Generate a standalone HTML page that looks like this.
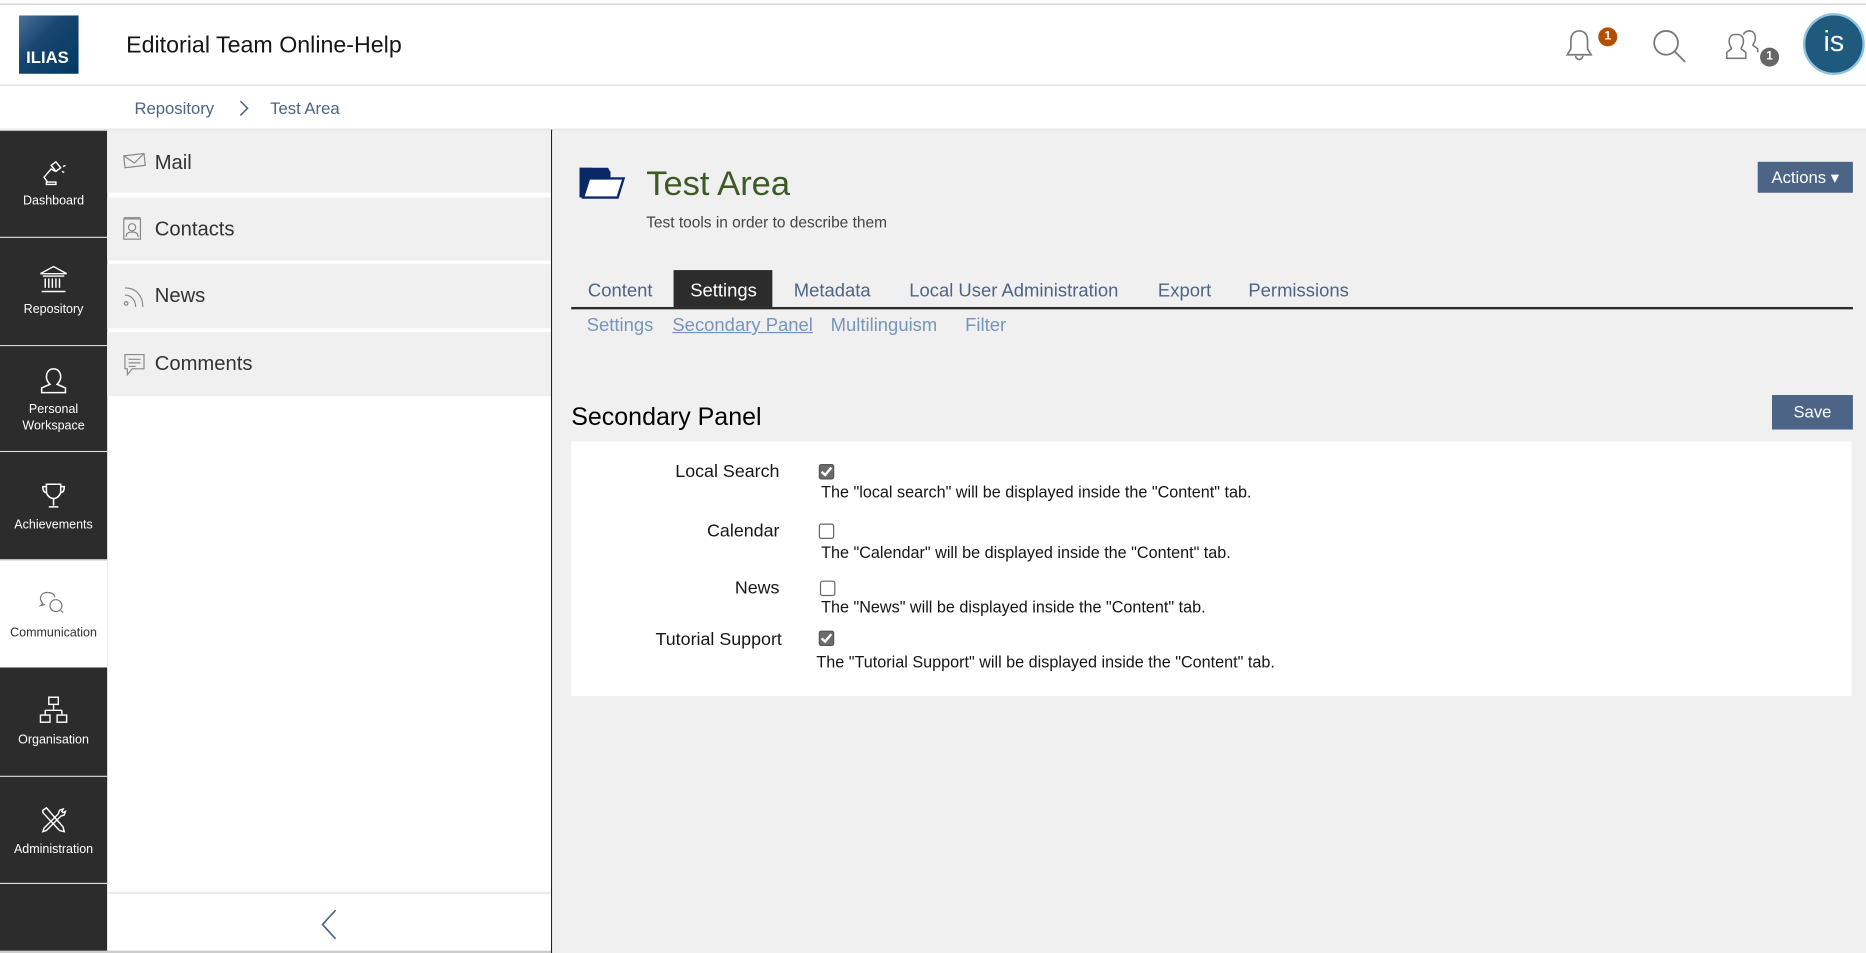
<!DOCTYPE html>
<html><head><meta charset="utf-8">
<style>
html,body{margin:0;padding:0;width:1866px;height:953px;overflow:hidden;background:#fff;font-family:"Liberation Sans",sans-serif;}
#s{position:absolute;left:0;top:0;width:1568px;height:801px;transform:scale(1.19005,1.1898);transform-origin:0 0;background:#fff;}
.a{position:absolute;white-space:nowrap;}
.sb{position:absolute;left:0;width:90px;background:#2c2c2c;color:#fff;font-size:10.5px;text-align:center;}
.sb svg{display:block;margin:0 auto 4px;}
.sl{position:absolute;left:90px;width:373px;height:52px;background:#f0f0f0;font-size:17px;color:#333;}
.sl span{position:absolute;left:40px;top:17px;}
.sl svg{position:absolute;left:13px;top:17px;}
.tab{position:absolute;top:236px;font-size:15.5px;color:#4c6586;}
.sub{position:absolute;top:265px;font-size:15.5px;color:#7795b8;}
.lbl{position:absolute;font-size:15px;color:#161616;text-align:right;width:200px;}
.hlp{position:absolute;font-size:13.6px;color:#161616;}
.cb{position:absolute;width:11px;height:11px;border:1px solid #666;border-radius:2px;background:#fff;}
.cb.on{background:#6b6b6b;border-color:#555;}
.cb.on:after{content:"";position:absolute;left:3px;top:0px;width:3px;height:7px;border:solid #fff;border-width:0 2px 2px 0;transform:rotate(40deg);}
</style></head><body><div id="s">
<div class="a" style="left:0;top:0;width:1568px;height:3px;background:#fff;border-bottom:1px solid #ccc"></div>
<div class="a" style="left:0;top:71px;width:1568px;height:1px;background:#ddd"></div>
<div class="a" style="left:16px;top:13px;width:50px;height:49px;background:linear-gradient(135deg,#4a6f96 0%,#17456f 40%,#023a64 100%);"></div>
<div class="a" style="left:22px;top:40px;font-size:14px;font-weight:bold;color:#fff">ILIAS</div>
<div class="a" style="left:106px;top:27px;font-size:19.5px;color:#161616">Editorial Team Online-Help</div>
<svg class="a" style="left:1312px;top:22px" width="30" height="32" viewBox="0 0 30 32" fill="none" stroke="#777" stroke-width="1.4"><path d="M15 4c-5 0-7 4-7 8v7l-3 5h20l-3-5v-7c0-4-2-8-7-8z"/><path d="M12 25a3 3 0 0 0 6 0"/></svg>
<div class="a" style="left:1343px;top:23px;width:16px;height:16px;border-radius:50%;background:#b54f00;color:#fff;font-size:10px;font-weight:bold;text-align:center;line-height:16px">1</div>
<svg class="a" style="left:1387px;top:23px" width="32" height="32" viewBox="0 0 32 32" fill="none" stroke="#777" stroke-width="1.5"><circle cx="13" cy="13" r="10"/><path d="M20 20l9 9"/></svg>
<svg class="a" style="left:1447px;top:23px" width="34" height="32" viewBox="0 0 34 32" fill="none" stroke="#777" stroke-width="1.3"><path d="M11 6c-3 0-5 2-5 6 0 3 2 5 2 6l-4 3v5h16v-5l-4-3c0-1 2-3 2-6 0-4-2-6-5-6z"/><path d="M18 6c1-2 3-3 5-3 3 0 5 2 5 6 0 3-2 5-2 6l4 3v3"/></svg>
<div class="a" style="left:1479px;top:40px;width:16px;height:16px;border-radius:50%;background:#666;color:#fff;font-size:10px;font-weight:bold;text-align:center;line-height:16px">1</div>
<div class="a" style="left:1515px;top:11px;width:48px;height:48px;border-radius:50%;background:#1f5a7e;border:2px solid #8bc3e0;color:#fff;font-size:24px;text-align:center;line-height:46px">is</div>
<div class="a" style="left:113px;top:83px;font-size:14px;color:#4c6586">Repository</div>
<svg class="a" style="left:199px;top:83px" width="12" height="16" viewBox="0 0 12 16" fill="none" stroke="#4c6586" stroke-width="1.3"><path d="M3 2l6 6-6 6"/></svg>
<div class="a" style="left:227px;top:83px;font-size:14px;color:#4c6586">Test Area</div>
<div class="a" style="left:0;top:108px;width:1568px;height:2px;background:#e8e8e8"></div>
<div class="sb" style="top:110px;height:691px"></div>
<div class="sb" style="top:110px;height:89px;border-bottom:1px solid #ddd"><svg width="24" height="26" viewBox="0 0 24 26" style="margin-top:23px" fill="none" stroke="#fff" stroke-width="1.2"><path d="M6 20h8v2H6zM7 20l-3-4 6-7 3 2"/><path d="M10 6l4-3 4 5-4 3z"/><path d="M20 7l2-1M19 11l2 1"/></svg><div style="margin-top:0px">Dashboard</div></div>
<div class="sb" style="top:200px;height:90px;border-bottom:1px solid #ddd"><svg width="24" height="26" viewBox="0 0 24 26" style="margin-top:22px" fill="none" stroke="#fff" stroke-width="1.2"><path d="M1 8l11-6 11 6z"/><path d="M3 10h18M5 12v8M8 12v8M11 12v8M14 12v8M17 12v8M2 23h20"/></svg><div style="margin-top:6px">Repository</div></div>
<div class="sb" style="top:291px;height:88px;border-bottom:1px solid #ddd"><svg width="24" height="26" viewBox="0 0 24 26" style="margin-top:16px" fill="none" stroke="#fff" stroke-width="1.3"><path d="M12 3c-4 0-6 3-6 7 0 3 2 5 3 6l-7 3v4h20v-4l-7-3c1-1 3-3 3-6 0-4-2-7-6-7z"/></svg><div style="line-height:14px">Personal<br>Workspace</div></div>
<div class="sb" style="top:380px;height:90px;border-bottom:1px solid #ddd"><svg width="24" height="26" viewBox="0 0 24 26" style="margin-top:24px" fill="none" stroke="#fff" stroke-width="1.3"><path d="M6 3h12v6c0 3-3 6-6 6s-6-3-6-6z"/><path d="M6 5H3c0 3 1 5 3 5M18 5h3c0 3-1 5-3 5M12 15v6M8 22h8"/></svg><div style="margin-top:5px">Achievements</div></div>
<div class="sb" style="top:471px;height:90px;background:#fff;color:#333;"><svg width="26" height="26" viewBox="0 0 26 26" style="margin-top:23px" fill="none" stroke="#777" stroke-width="1"><path d="M8 4c-4 0-6 2-6 5 0 2 1 3 2 4l-2 2 4-1"/><path d="M8 4c4 0 6 2 6 4"/><circle cx="15" cy="15" r="5"/><path d="M19 19l2 2"/></svg><div style="margin-top:6px">Communication</div></div>
<div class="sb" style="top:562px;height:90px;border-bottom:1px solid #ddd"><svg width="24" height="26" viewBox="0 0 24 26" style="margin-top:22px" fill="none" stroke="#fff" stroke-width="1.2"><rect x="8" y="2" width="8" height="6"/><path d="M12 8v5M5 13h14M5 13v4M19 13v4"/><rect x="1" y="17" width="8" height="6"/><rect x="15" y="17" width="8" height="6"/></svg><div style="margin-top:6px">Organisation</div></div>
<div class="sb" style="top:653px;height:89px;border-bottom:1px solid #ddd"><svg width="24" height="26" viewBox="0 0 24 26" style="margin-top:24px" fill="none" stroke="#fff" stroke-width="1.2"><path d="M3 4l3-2 14 16 1 4-4-1L3 6z"/><path d="M20 3l-3 1-1 3L4 19l-1 3 3-1 12-12 3-1 1-3-2 1-1-1z"/></svg><div style="margin-top:5px">Administration</div></div>
<div class="sl" style="top:110px"><svg width="20" height="16" viewBox="0 0 20 16" fill="none" stroke="#888" stroke-width="1"><path d="M1 4l17-2 1 10-17 2z"/><path d="M1 4l9 6 8-8"/></svg><span>Mail</span></div>
<div class="sl" style="top:166px;height:53px"><svg width="16" height="20" viewBox="0 0 16 20" fill="none" stroke="#888" stroke-width="1" style="top:16px"><rect x="1" y="2" width="14" height="17"/><path d="M1 1h14"/><circle cx="8" cy="9" r="3"/><path d="M3 17c0-3 2-4 5-4s5 1 5 4"/></svg><span>Contacts</span></div>
<div class="sl" style="top:222px;height:54px"><svg width="20" height="20" viewBox="0 0 20 20" fill="none" stroke="#888" stroke-width="1"><circle cx="3" cy="16" r="1.5"/><path d="M2 9c5 0 9 4 9 10M2 3c9 0 15 6 15 16"/></svg><span>News</span></div>
<div class="sl" style="top:279px;height:54px"><svg width="20" height="22" viewBox="0 0 20 22" fill="none" stroke="#888" stroke-width="1"><path d="M2 2h16v12H8l-4 5v-5H2z"/><path d="M5 6h10M5 9h10M5 12h6"/></svg><span>Comments</span></div>
<div class="a" style="left:90px;top:750px;width:373px;height:1px;background:#ddd"></div>
<svg class="a" style="left:268px;top:763px" width="18" height="28" viewBox="0 0 18 28" fill="none" stroke="#4c6586" stroke-width="1.4"><path d="M14 2L3 14l11 12"/></svg>
<div class="a" style="left:463px;top:109px;width:1px;height:692px;background:#222"></div>
<div class="a" style="left:0;top:799px;width:463px;height:2px;background:#ccc"></div>
<div class="a" style="left:464px;top:110px;width:1104px;height:691px;background:#f0f0f0"></div>
<svg class="a" style="left:486px;top:139px" width="42" height="30" viewBox="0 0 42 30"><path d="M1 2h10l2 3h14v5H9L5 27H1z" fill="#0a2a6a"/><path d="M1 10h26v-5" fill="#0a2a6a"/><path d="M9 11h29l-5 16H4z" fill="#fff" stroke="#0a2a6a" stroke-width="2"/><path d="M1 2h24l2 4v5H9L4 27H1z" fill="#0b2866"/></svg>
<div class="a" style="left:543px;top:139px;font-size:29px;color:#3c5a25">Test Area</div>
<div class="a" style="left:543px;top:179px;font-size:13px;color:#444">Test tools in order to describe them</div>
<div class="a" style="left:1477px;top:136px;width:80px;height:26px;background:#4c6586;color:#fff;font-size:14px;line-height:26px;text-align:center">Actions ▾</div>
<div class="tab" style="left:494px">Content</div>
<div class="a" style="left:566px;top:227px;width:83px;height:31px;background:#2c2c2c"></div>
<div class="tab" style="left:580px;color:#fff">Settings</div>
<div class="tab" style="left:667px">Metadata</div>
<div class="tab" style="left:764px">Local User Administration</div>
<div class="tab" style="left:973px">Export</div>
<div class="tab" style="left:1049px">Permissions</div>
<div class="a" style="left:480px;top:258px;width:1077px;height:2px;background:#2c2c2c"></div>
<div class="sub" style="left:493px">Settings</div>
<div class="sub" style="left:565px;text-decoration:underline">Secondary Panel</div>
<div class="sub" style="left:698px">Multilinguism</div>
<div class="sub" style="left:811px">Filter</div>
<div class="a" style="left:480px;top:339px;font-size:21px;color:#000">Secondary Panel</div>
<div class="a" style="left:1489px;top:332px;width:68px;height:29px;background:#4c6586;color:#fff;font-size:14px;line-height:29px;text-align:center">Save</div>
<div class="a" style="left:480px;top:371px;width:1076px;height:214px;background:#fff"></div>
<div class="lbl" style="left:455px;top:388px">Local Search</div>
<div class="cb on" style="left:688px;top:390px"></div>
<div class="hlp" style="left:690px;top:406px">The "local search" will be displayed inside the "Content" tab.</div>
<div class="lbl" style="left:455px;top:438px">Calendar</div>
<div class="cb" style="left:688px;top:440px"></div>
<div class="hlp" style="left:690px;top:457px">The "Calendar" will be displayed inside the "Content" tab.</div>
<div class="lbl" style="left:455px;top:486px">News</div>
<div class="cb" style="left:689px;top:488px"></div>
<div class="hlp" style="left:690px;top:503px">The "News" will be displayed inside the "Content" tab.</div>
<div class="lbl" style="left:457px;top:529px">Tutorial Support</div>
<div class="cb on" style="left:688px;top:530px"></div>
<div class="hlp" style="left:686px;top:549px">The "Tutorial Support" will be displayed inside the "Content" tab.</div>
</div></body></html>
